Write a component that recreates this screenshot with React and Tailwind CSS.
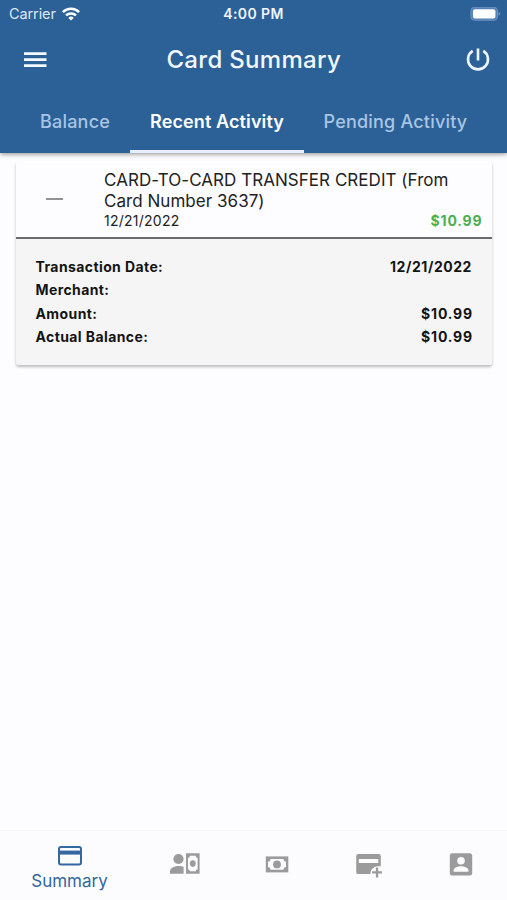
import React from "react";

function StatusBar() {
  return (
    <div className="flex h-[28px] items-center justify-between pl-[9px] pr-[6px]">
      <div className="flex w-[180px] items-center gap-[6px]">
        <span className="text-[14.5px] leading-[20px] tracking-[-0.1px] text-[#dbe8f6]">Carrier</span>
        <svg width="18" height="14" viewBox="0 0 18 14" fill="none" stroke="#fff" strokeWidth="2.5">
          <path d="M.9 5.1a11.6 11.6 0 0 1 16.2 0M4 8.4a7.2 7.2 0 0 1 10 0" />
          <path d="M9 13.6 6.3 10.9a3.9 3.9 0 0 1 5.4 0Z" fill="#fff" stroke="none" />
        </svg>
      </div>
      <span className="text-[14px] font-semibold leading-[20px] tracking-[0.4px] text-[#eef5fd]">4:00 PM</span>
      <div className="flex w-[183px] justify-end">
        <svg width="31" height="15" viewBox="0 0 31 15">
          <rect x=".9" y=".3" width="26.6" height="13" rx="3.6" fill="#5682b3" stroke="#6990bd" strokeWidth="1" />
          <rect x="3" y="2.2" width="22.4" height="9.2" rx="2" fill="#fff" />
          <path d="M28.6 4.8a2.2 2.2 0 0 1 0 4Z" fill="#7d9fc6" />
        </svg>
      </div>
    </div>
  );
}

function TitleBar() {
  return (
    <div className="flex h-[63px] items-center justify-between pl-[24px] pr-[17.5px]">
      <svg width="24" height="20" viewBox="0 0 24 20" fill="#f4f9ff">
        <path d="M0 2.3h22.5v2.7H0zM0 8.3h22.5v2.7H0zM0 14.3h22.5v2.7H0z" />
      </svg>
      <h1 className="pr-[6px] text-[24px] font-medium leading-[30px] tracking-[0.3px] text-[#f1f7ff]">Card Summary</h1>
      <svg width="24" height="24" viewBox="0 0 24 24" fill="none" stroke="#eef6ff" strokeWidth="2.6">
        <path d="M12 .5v12M6.7 2.9a10 10 0 1 0 10.6 0" />
      </svg>
    </div>
  );
}

function Tabs() {
  return (
    <div className="flex h-[62px] justify-center text-[18px] leading-[62px] text-[#a9c5e4]">
      <div className="w-[110px] text-center font-medium tracking-[0.2px]">Balance</div>
      <div className="w-[174px] border-b-3 border-[#e6effb] text-center font-semibold tracking-[0.12px] text-white">Recent Activity</div>
      <div className="w-[183px] text-center font-medium tracking-[0.2px]">Pending Activity</div>
    </div>
  );
}

const details = [
  ["Transaction Date:", "12/21/2022"],
  ["Merchant:", ""],
  ["Amount:", "$10.99"],
  ["Actual Balance:", "$10.99"],
];

function ActivityCard() {
  return (
    <section className="ml-[16px] mr-[15px] mt-[8px] h-[204px] rounded-[3px] bg-[#fdfdff] shadow-[0_2px_3px_rgba(0,0,0,0.26)]">
      <div className="flex h-[78px] border-b-2 border-[#6b6a6e]">
        <div className="flex w-[88px] items-center pl-[30px]">
          <div className="h-[2.5px] w-[17px] bg-[#929292]" />
        </div>
        <div className="flex-1 pt-[9px] pr-[9.5px] text-[#222]">
          <div className="text-[17px] leading-[21px] tracking-[0.04px]">
            CARD-TO-CARD TRANSFER CREDIT (From
            <br />
            Card Number 3637)
          </div>
          <div className="flex justify-between text-[14px] leading-[17px]">
            <span className="tracking-[0.25px]">12/21/2022</span>
            <span className="font-bold tracking-[0.85px] text-[#4caf50]">$10.99</span>
          </div>
        </div>
      </div>
      <div className="h-[126px] rounded-b-[3px] bg-[#f5f5f5] pl-[19.5px] pr-[19px] pt-[16px] text-[14px] font-bold text-[#141414]">
        {details.map(([label, value]) => (
          <div key={label} className="flex h-[23.3px] items-center justify-between leading-[23px]">
            <span className="tracking-[0.4px]">{label}</span>
            <span className={value.startsWith("$") ? "tracking-[0.85px]" : "pr-[1px] tracking-[0.55px]"}>{value}</span>
          </div>
        ))}
      </div>
    </section>
  );
}

function BottomNav() {
  return (
    <nav className="flex h-[70px] border-t border-[#f5f4f7] bg-[#fcfcfe] text-[#9b9b9b]">
      <div className="flex w-[139px] flex-col items-center pt-[14px] text-[#3567a0]">
        <svg width="26" height="22" viewBox="0 0 26 22">
          <rect x="2" y="2" width="22" height="17.6" rx="2" fill="none" stroke="currentColor" strokeWidth="2" />
          <path d="M2 5.6h22v4H2z" fill="currentColor" />
        </svg>
        <span className="text-[17px] leading-[28px]">Summary</span>
      </div>
      <div className="flex w-[91px] items-start justify-center pt-[21px]">
        <svg width="31" height="24" viewBox="0 0 31 24" fill="currentColor">
          <circle cx="9.5" cy="7" r="5.1" />
          <path d="M1 21.8v-2.6c0-3.5 5.2-5.2 9-5.2 1.7 0 3.2.3 4.6.8v7zM17 1.3h13.6v20.5H17z" />
          <path d="M21 3.8h5.6a2.4 2.4 0 0 0 2 2.2v11.2a2.4 2.4 0 0 0-2 2.1H21a2.4 2.4 0 0 0-2-2.1V6a2.4 2.4 0 0 0 2-2.2Z" fill="#fcfcfe" />
          <ellipse cx="23.8" cy="11.6" rx="2.9" ry="3.3" />
        </svg>
      </div>
      <div className="flex w-[93px] items-start justify-center pt-[25px]">
        <svg width="24" height="17" viewBox="0 0 24 17" fill="currentColor">
          <path d="M.8.4h22.5v16H.8z" />
          <path d="M5.6 3h12.8A3 3 0 0 0 21 5.8v5.3a3 3 0 0 0-2.6 2.7H5.6A3 3 0 0 0 3 11.1V5.8A3 3 0 0 0 5.6 3Z" fill="#fcfcfe" />
          <circle cx="12" cy="8.4" r="3.9" />
        </svg>
      </div>
      <div className="flex w-[92px] items-start justify-center pt-[22px]">
        <svg width="28" height="26" viewBox="0 0 28 26" fill="currentColor">
          <path d="M3.5 1h20a2.2 2.2 0 0 1 2.3 2.3v10h-3.4a7.4 7.4 0 0 0-7.1 7.8H3.5a2.2 2.2 0 0 1-2.3-2.2V3.3A2.2 2.2 0 0 1 3.5 1Z" />
          <path d="M3.8 6h19.5v4H3.8z" fill="#fcfcfe" />
          <path d="M20.9 14.4h2.3v3.9H27v2.3h-3.8v3.9h-2.3v-3.9h-3.8v-2.3h3.8z" />
        </svg>
      </div>
      <div className="flex w-[92px] items-start justify-center pt-[21px]">
        <svg width="24" height="25" viewBox="0 0 24 25" fill="currentColor">
          <rect x=".8" y="1.2" width="22.4" height="22.2" rx="2.5" />
          <g fill="#fcfcfe">
            <circle cx="12" cy="8.8" r="3.8" />
            <path d="M4.6 19.7v-1.4c0-2.7 4.9-4.1 7.4-4.1s7.4 1.4 7.4 4.1v1.4z" />
          </g>
        </svg>
      </div>
    </nav>
  );
}

export default function App() {
  return (
    <div className="flex h-[900px] w-[507px] flex-col overflow-hidden bg-[#fdfdff] font-['Inter',sans-serif]">
      <header className="relative h-[153px] shrink-0 bg-[#2c6197] shadow-[0_1px_5px_rgba(0,0,0,0.45)]">
        <StatusBar />
        <TitleBar />
        <Tabs />
      </header>
      <main className="flex-1">
        <ActivityCard />
      </main>
      <BottomNav />
    </div>
  );
}
